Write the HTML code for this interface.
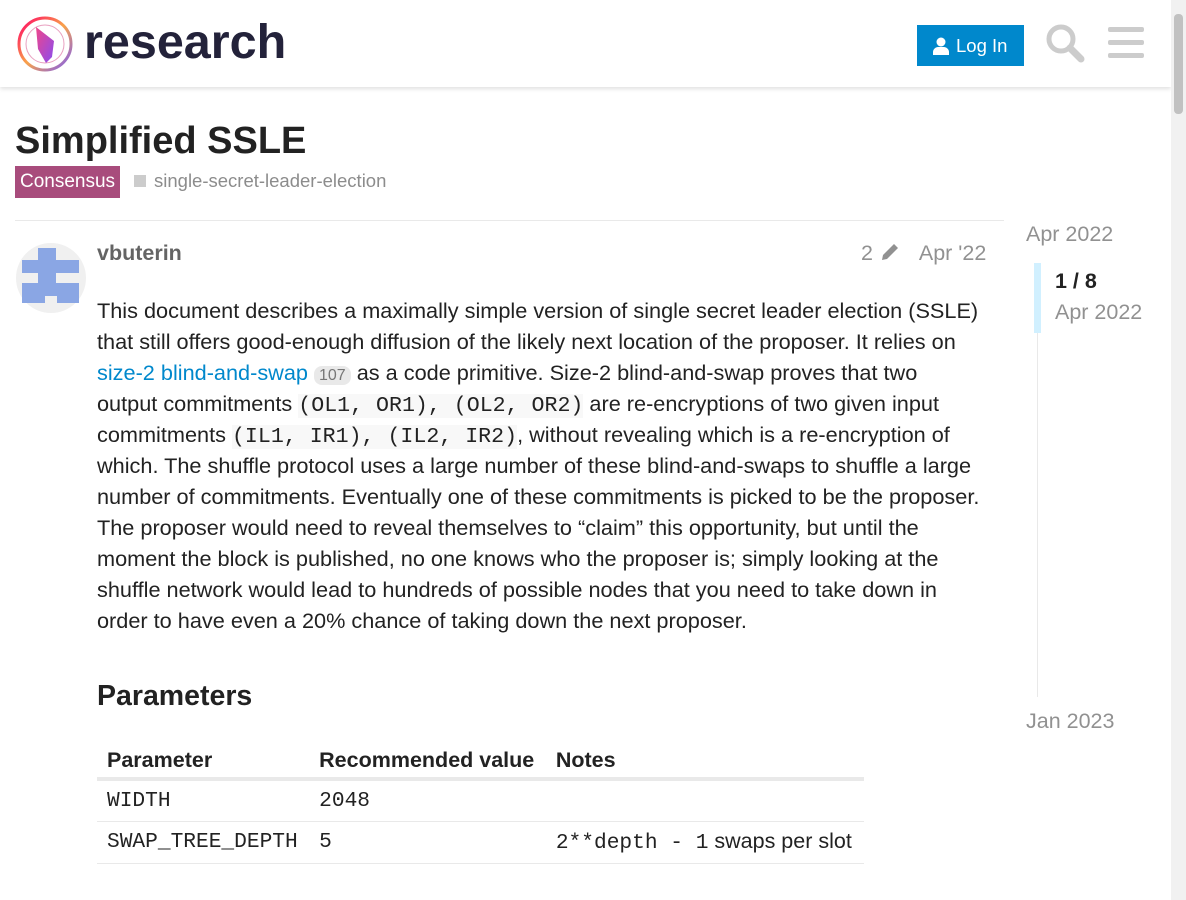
<!DOCTYPE html>
<html><head><meta charset="utf-8"><style>
*{box-sizing:border-box;margin:0;padding:0}
body{width:1186px;height:900px;overflow:hidden;background:#fff;font-family:"Liberation Sans",sans-serif;color:#222;position:relative}
.hdr{position:absolute;left:0;top:0;width:1171px;height:87px;background:#fff;box-shadow:0 2px 4px rgba(0,0,0,.12)}
.sb{position:absolute;right:0;top:0;width:15px;height:900px;background:#f1f1f1}
.sb div{position:absolute;left:3px;top:14px;width:9px;height:100px;background:#c1c1c1;border-radius:4px}
.logo-t{position:absolute;left:84px;top:14px;font-size:48.5px;font-weight:bold;color:#23223a}
.login{position:absolute;left:917px;top:25px;width:107px;height:41px;background:#0088cc;color:#fff;font-size:18.5px;line-height:41px;padding-left:39px}
h1{position:absolute;left:15px;top:120px;font-size:38px;font-weight:bold;color:#222}
.cat{position:absolute;left:15px;top:166px;height:32px;background:#a84c7c;color:#fff;font-size:19px;line-height:32px;padding:0 5px}
.tag{position:absolute;left:134px;top:170px;font-size:18.5px;color:#8c8c8c}
.tag:before{content:"";display:inline-block;width:12px;height:12px;background:#ccc;margin-right:8px}
.line{position:absolute;left:15px;top:220px;width:989px;height:1px;background:#e9e9e9}
.user{position:absolute;left:97px;top:241px;font-size:21.5px;font-weight:bold;color:#646464}
.meta{position:absolute;left:861px;top:241px;font-size:21.5px;color:#919191}
.post{position:absolute;left:97px;top:295px;width:886px;font-size:21.7px;line-height:31px;color:#222}
.post a{color:#0088cc;text-decoration:none}
.badge{font-size:16px;background:#e9e9e9;color:#777;border-radius:8px;padding:1px 5px;line-height:16px}
code{font-family:"Liberation Mono",monospace;background:#f8f8f8;font-size:21.6px;line-height:20px}
h2{position:absolute;left:97px;top:680px;font-size:28.5px;font-weight:bold}
table{position:absolute;left:97px;top:743px;border-collapse:collapse;font-size:21.5px;width:767px}
th{text-align:left;font-weight:bold;padding:4px 10px;height:36px;border-bottom:4px solid #e9e9e9;white-space:nowrap}
td{padding:0 10px;height:42px;border-bottom:1px solid #e9e9e9;white-space:nowrap}
.mono{font-family:"Liberation Mono",monospace;font-size:21.2px}
.tl{position:absolute;font-size:21.5px;color:#919191}
</style></head><body>
<div class="hdr">
<svg style="position:absolute;left:16px;top:15px" width="58" height="58" viewBox="0 0 58 58"><defs><linearGradient id="g" x1="0" y1="0" x2="1" y2="1"><stop offset="0" stop-color="#f06"/><stop offset=".5" stop-color="#f9a24a"/><stop offset="1" stop-color="#7b5cf5"/></linearGradient><linearGradient id="g2" x1="0" y1="0" x2="1" y2="1"><stop offset="0" stop-color="#f0468a"/><stop offset="1" stop-color="#8a4cf0"/></linearGradient></defs><circle cx="29" cy="29" r="26" fill="none" stroke="url(#g)" stroke-width="3"/><circle cx="29" cy="29" r="19" fill="none" stroke="#e8a0c0" stroke-width="1"/><path d="M20 12 L38 26 L36 42 L30 48 L22 34Z" fill="url(#g2)"/></svg>
<div class="logo-t">research</div>
<div class="login"><svg style="position:absolute;left:16px;top:12px" width="16" height="18" viewBox="0 0 16 18"><circle cx="8" cy="5" r="4.5" fill="#fff"/><path d="M0 18v-3c0-3 3-5 5-5h6c2 0 5 2 5 5v3z" fill="#fff"/></svg>Log In</div>
<svg style="position:absolute;left:1045px;top:23px" width="40" height="40" viewBox="0 0 40 40"><circle cx="16" cy="16" r="12" fill="none" stroke="#ccc" stroke-width="5"/><path d="M25 25l11 11" stroke="#ccc" stroke-width="7" stroke-linecap="round"/></svg>
<svg style="position:absolute;left:1108px;top:27px" width="36" height="32"><rect y="0" width="36" height="5" rx="2" fill="#ccc"/><rect y="13" width="36" height="5" rx="2" fill="#ccc"/><rect y="26" width="36" height="5" rx="2" fill="#ccc"/></svg>
</div>
<div class="sb"><div></div></div>
<h1>Simplified SSLE</h1>
<div class="cat">Consensus</div>
<div class="tag">single-secret-leader-election</div>
<div class="line"></div>
<svg style="position:absolute;left:16px;top:243px" width="70" height="70"><circle cx="35" cy="35" r="35" fill="#f0f0f0"/><rect x="22" y="5" width="18" height="50" fill="#8aa6e4"/><rect x="6" y="17" width="57" height="13" fill="#8aa6e4"/><rect x="6" y="40" width="57" height="20" fill="#8aa6e4"/><rect x="29" y="53" width="12" height="12" fill="#f0f0f0"/></svg>
<div class="user">vbuterin</div>
<div class="meta">2 <svg width="22" height="22" viewBox="0 0 22 22" style="vertical-align:-3px"><path d="M3 19l1-5L15 3l4 4L8 18z" fill="#919191"/></svg> &nbsp;&nbsp;Apr '22</div>
<div class="post">This document describes a maximally simple version of single secret leader election (SSLE) that still offers good-enough diffusion of the likely next location of the proposer. It relies on <a>size-2 blind-and-swap</a> <span class="badge">107</span> as a code primitive. Size-2 blind-and-swap proves that two output commitments <code>(OL1, OR1), (OL2, OR2)</code> are re-encryptions of two given input commitments <code>(IL1, IR1), (IL2, IR2)</code>, without revealing which is a re-encryption of which. The shuffle protocol uses a large number of these blind-and-swaps to shuffle a large number of commitments. Eventually one of these commitments is picked to be the proposer. The proposer would need to reveal themselves to “claim” this opportunity, but until the moment the block is published, no one knows who the proposer is; simply looking at the shuffle network would lead to hundreds of possible nodes that you need to take down in order to have even a 20% chance of taking down the next proposer.</div>
<h2>Parameters</h2>
<table><tr><th>Parameter</th><th>Recommended value</th><th>Notes</th></tr>
<tr><td class="mono">WIDTH</td><td class="mono">2048</td><td></td></tr>
<tr><td class="mono">SWAP_TREE_DEPTH</td><td class="mono">5</td><td><span class="mono">2**depth - 1</span> swaps per slot</td></tr></table>
<div class="tl" style="left:1026px;top:222px">Apr 2022</div>
<div style="position:absolute;left:1037px;top:263px;width:1px;height:434px;background:#e9e9e9"></div>
<div style="position:absolute;left:1034px;top:263px;width:7px;height:70px;background:#d1f0ff"></div>
<div class="tl" style="left:1055px;top:269px;color:#222;font-weight:bold">1 / 8</div>
<div class="tl" style="left:1055px;top:300px">Apr 2022</div>
<div class="tl" style="left:1026px;top:709px">Jan 2023</div>
</body></html>
